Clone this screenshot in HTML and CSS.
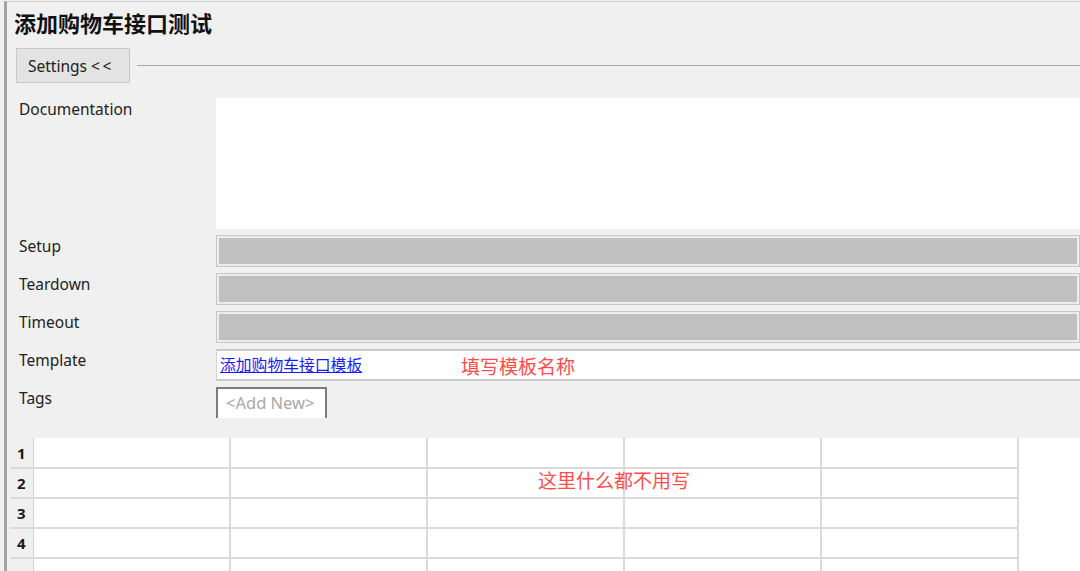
FILE: index.html
```html
<!DOCTYPE html>
<html lang="zh-CN">
<head>
<meta charset="utf-8">
<title>添加购物车接口测试</title>
<link rel="stylesheet" href="styles.css">
</head>
<body>
<div class="window">
  <h1 class="title">添加购物车接口测试</h1>
  <div class="settings-bar">
    <button class="settings-btn">Settings <span class="chev">&lt;&lt;</span></button>
    <div class="rule"></div>
  </div>
  <div class="form">
    <div class="label">Documentation</div>
    <div class="doc-box"></div>
    <div class="label">Setup</div>
    <div class="field disabled"></div>
    <div class="label">Teardown</div>
    <div class="field disabled"></div>
    <div class="label">Timeout</div>
    <div class="field disabled"></div>
    <div class="label">Template</div>
    <div class="field template">
      <a class="tpl-link" href="#">添加购物车接口模板</a>
      <span class="note">填写模板名称</span>
    </div>
    <div class="label">Tags</div>
    <div class="tags"><span class="add-new">&lt;Add New&gt;</span></div>
  </div>
  <div class="grid-wrap">
    <table class="grid">
      <tbody>
        <tr><th>1</th><td></td><td></td><td></td><td></td><td></td></tr>
        <tr><th>2</th><td></td><td></td><td></td><td></td><td></td></tr>
        <tr><th>3</th><td></td><td></td><td></td><td></td><td></td></tr>
        <tr><th>4</th><td></td><td></td><td></td><td></td><td></td></tr>
        <tr><th></th><td></td><td></td><td></td><td></td><td></td></tr>
      </tbody>
    </table>
    <span class="grid-note">这里什么都不用写</span>
  </div>
</div>
</body>
</html>
```

FILE: styles.css
```css
html, body {
  margin: 0;
  padding: 0;
  height: 100%;
  background: #f0f0f0;
  overflow: hidden;
}

body {
  font-family: "Noto Sans", "Noto Sans CJK SC", sans-serif;
  color: #1e1e1e;
}

.window {
  box-sizing: border-box;
  height: 100vh;
  margin-left: 4px;
  margin-top: 1px;
  border-left: 3px solid #a3a3a3;
  border-top: 1px solid #cfcfcf;
  display: flex;
  flex-direction: column;
  background: #f0f0f0;
}

.title {
  margin: 0;
  padding: 5px 0 0 7px;
  font-family: "Noto Sans CJK SC", sans-serif;
  font-size: 22px;
  line-height: 30px;
  font-weight: 700;
  color: #111;
}

.settings-bar {
  display: flex;
  align-items: center;
  margin: 11px 0 0 9px;
  gap: 7px;
}

.settings-btn {
  box-sizing: border-box;
  width: 114px;
  height: 35px;
  padding: 0 0 0 11px;
  text-align: left;
  background: #e3e3e3;
  border: 1px solid #c9c9c9;
  font-family: "Noto Sans", sans-serif;
  font-size: 15.5px;
  color: #222;
}

.chev {
  letter-spacing: 2.5px;
}

.rule {
  flex: 1;
  height: 1px;
  background: #a8a8a8;
}

.form {
  display: grid;
  grid-template-columns: 197px 1fr;
  row-gap: 6px;
  margin: 15px 0 0 12px;
}

.label {
  font-size: 15.5px;
  line-height: 20px;
  padding-top: 1px;
  color: #222;
}

.doc-box {
  height: 131px;
  background: #ffffff;
}

.field {
  box-sizing: border-box;
  height: 32px;
}

.disabled {
  background: #c0c0c0;
  border: 1px solid #c6c6c6;
  box-shadow: inset 0 0 0 2px #ececec;
}

.template {
  display: grid;
  grid-template-columns: 241px auto;
  align-items: center;
  background: #ffffff;
  border-top: 2px solid #cacaca;
  border-bottom: 2px solid #cacaca;
  border-left: 1px solid #d4d4d4;
  padding-left: 3px;
}

.tpl-link {
  font-family: "Noto Sans CJK SC", sans-serif;
  font-size: 15.8px;
  line-height: 20px;
  color: #1a1aff;
  text-decoration: underline;
}

.note {
  font-family: "Noto Sans CJK SC", sans-serif;
  font-size: 19px;
  color: #ff4a4a;
}

.tags {
  height: 32px;
  display: flex;
  align-items: flex-start;
}

.add-new {
  box-sizing: border-box;
  width: 111px;
  height: 31px;
  padding-left: 8px;
  background: #ffffff;
  border: 2px solid #7c7c7c;
  border-bottom: none;
  font-size: 16.5px;
  line-height: 28px;
  color: #a8a8a8;
}

.grid-wrap {
  position: relative;
  flex: 1;
  margin: 19px 0 0 3px;
  background: #ffffff;
  overflow: hidden;
}

.grid {
  border-collapse: collapse;
  table-layout: fixed;
}

.grid th,
.grid td {
  height: 30px;
  padding: 0;
  box-sizing: border-box;
  border-right: 2px solid #dadada;
  border-bottom: 2px solid #dadada;
}

.grid th {
  width: 23px;
  background: #f0f0f0;
  font-size: 15px;
  font-weight: 700;
  color: #1a1a1a;
  text-align: center;
  border-right: 1px solid #d0d0d0;
}

.grid td {
  width: 197px;
  background: #ffffff;
}

.grid-note {
  position: absolute;
  left: 528px;
  top: 28px;
  font-family: "Noto Sans CJK SC", sans-serif;
  font-size: 19px;
  color: #ff4d4d;
}
```
